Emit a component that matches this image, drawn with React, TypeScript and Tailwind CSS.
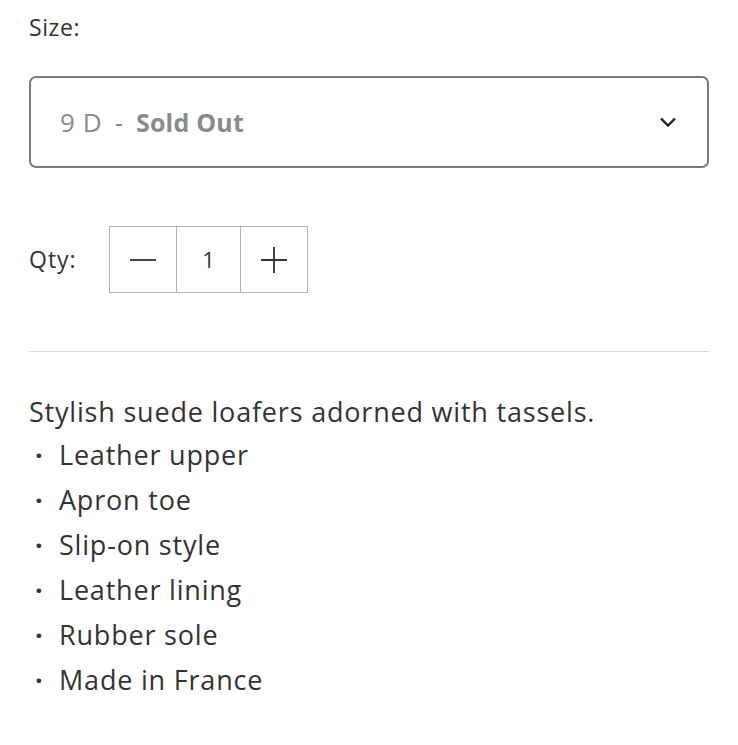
const features = [
  "Leather upper",
  "Apron toe",
  "Slip-on style",
  "Leather lining",
  "Rubber sole",
  "Made in France",
];

export default function App() {
  return (
    <div
      className="bg-white w-[738px] h-[745px] px-[29px] pt-[10px] text-[#333]"
      style={{ fontFamily: "'Open Sans', 'Noto Sans', sans-serif" }}
    >
      <div className="text-[23px] leading-[34px] tracking-[0.6px]">Size:</div>

      <button className="mt-[32px] w-full h-[92px] flex items-center justify-between pl-[29px] pr-[30px] border-2 border-[#7a7a7a] rounded-[7px]">
        <span className="text-[26px] text-[#8a8a8a] tracking-[0.6px]">
          9 D <span className="mx-[5px]">-</span>{" "}
          <span className="font-bold text-[25px] tracking-[0.2px]">Sold Out</span>
        </span>
        <svg width="18" height="12" viewBox="0 0 18 12" fill="none">
          <path d="M2 2.5 L9 9.5 L16 2.5" stroke="#222" strokeWidth="2.4" />
        </svg>
      </button>

      <div className="mt-[58px] flex items-center">
        <span className="text-[23px] tracking-[1px] w-[80px]">Qty:</span>
        <div className="flex border border-[#b5b5b5] h-[67px]">
          <button className="w-[66px] flex items-center justify-center">
            <svg width="28" height="28" viewBox="0 0 28 28">
              <path d="M1 14 H27" stroke="#333" strokeWidth="1.8" />
            </svg>
          </button>
          <div className="w-[65px] flex items-center justify-center border-x border-[#b5b5b5] text-[22px]">
            1
          </div>
          <button className="w-[66px] flex items-center justify-center">
            <svg width="28" height="28" viewBox="0 0 28 28">
              <path d="M1 14 H27 M14 1 V27" stroke="#333" strokeWidth="1.8" />
            </svg>
          </button>
        </div>
      </div>

      <div className="mt-[58px] border-t border-[#dcdcdc]" />

      <div className="mt-[40px] text-[27px] leading-[45px] tracking-[0.8px]">
        <p className="leading-[40px]">Stylish suede loafers adorned with tassels.</p>
        <ul>
          {features.map((f) => (
            <li key={f} className="flex">
              <span className="w-[30px] pl-[6px] font-bold">·</span>
              <span>{f}</span>
            </li>
          ))}
        </ul>
      </div>
    </div>
  );
}
